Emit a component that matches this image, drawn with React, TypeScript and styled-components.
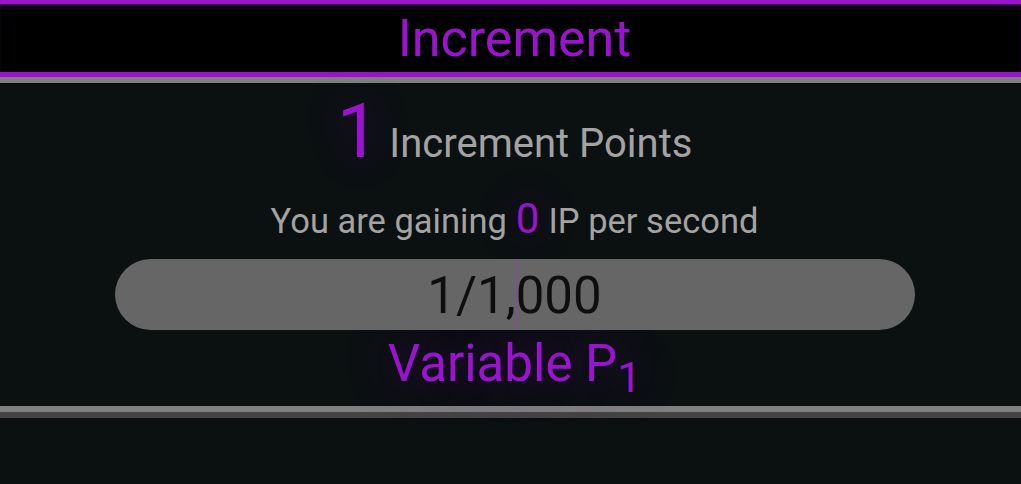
import React from 'react';
import styled, { createGlobalStyle } from 'styled-components';

const PURPLE = '#9a14cf';
const GLOW = '0 0 40px rgba(155, 20, 205, 0.35)';

const GlobalStyle = createGlobalStyle`
  html, body {
    margin: 0;
    padding: 0;
    background: #0b1011;
  }
  body {
    font-family: Roboto, "Noto Sans", sans-serif;
    min-height: 484px;
    overflow: hidden;
  }
`;

const Page = styled.div`
  width: 100%;
  min-height: 484px;
  background: #0b1011;
`;

const Header = styled.header`
  height: 68px;
  background: #000;
  border-top: 4px solid ${PURPLE};
  box-shadow: inset 0 3px 4px -2px rgba(155, 20, 205, 0.6);
  display: flex;
  justify-content: center;
  align-items: center;
  padding-left: 8px;
`;

const Title = styled.h1`
  margin: 0;
  font-size: 52px;
  font-weight: 400;
  line-height: 1;
  color: ${PURPLE};
  padding-top: 2px;
`;

const Rule = styled.div<{ $color: string; $size: number }>`
  height: ${(p) => p.$size}px;
  background: ${(p) => p.$color};
`;

const Panel = styled.section`
  display: flex;
  flex-direction: column;
  align-items: center;
  padding: 10px 0 6px 8px;
`;

const PointsRow = styled.div`
  display: flex;
  align-items: baseline;
  gap: 10px;
  line-height: 1;
`;

const BigNumber = styled.span<{ $size: number }>`
  font-size: ${(p) => p.$size}px;
  color: ${PURPLE};
  text-shadow: ${GLOW};
`;

const GrayText = styled.span<{ $size: number }>`
  font-size: ${(p) => p.$size}px;
  color: #a3a3a3;
`;

const RateRow = styled.div`
  margin-top: 29px;
  display: flex;
  align-items: baseline;
  gap: 9px;
  line-height: 1;
`;

const Bar = styled.div`
  position: relative;
  margin-top: 19px;
  width: 800px;
  height: 71px;
  border-radius: 36px;
  background: #666666;
  display: flex;
  justify-content: center;
  align-items: center;
`;

const BarText = styled.span`
  font-size: 51px;
  line-height: 1;
  color: #0e0e0e;
  padding-top: 2px;
`;

const BarMarker = styled.div`
  position: absolute;
  top: 0;
  bottom: 0;
  left: calc(50% + 1px);
  width: 1px;
  background: #8d45a6;
`;

const Upgrade = styled.div`
  margin-top: 8px;
  font-size: 51px;
  line-height: 1;
  color: ${PURPLE};
  text-shadow: 0 0 50px rgba(155, 20, 205, 0.45);

  sub {
    line-height: 1;
  }
`;

export default function App() {
  return (
    <Page>
      <GlobalStyle />
      <Header>
        <Title>Increment</Title>
      </Header>
      <Rule $color={PURPLE} $size={5} />
      <Rule $color="#808080" $size={6} />
      <Panel>
        <PointsRow>
          <BigNumber $size={76}>1</BigNumber>
          <GrayText $size={40}>Increment Points</GrayText>
        </PointsRow>
        <RateRow>
          <GrayText $size={34.5}>You are gaining</GrayText>
          <BigNumber $size={42}>0</BigNumber>
          <GrayText $size={34.5}>IP per second</GrayText>
        </RateRow>
        <Bar>
          <BarText>1/1,000</BarText>
          <BarMarker />
        </Bar>
        <Upgrade>
          Variable P<sub>1</sub>
        </Upgrade>
      </Panel>
      <Rule $color="#808080" $size={6} />
      <Rule $color="#444444" $size={6} />
    </Page>
  );
}
